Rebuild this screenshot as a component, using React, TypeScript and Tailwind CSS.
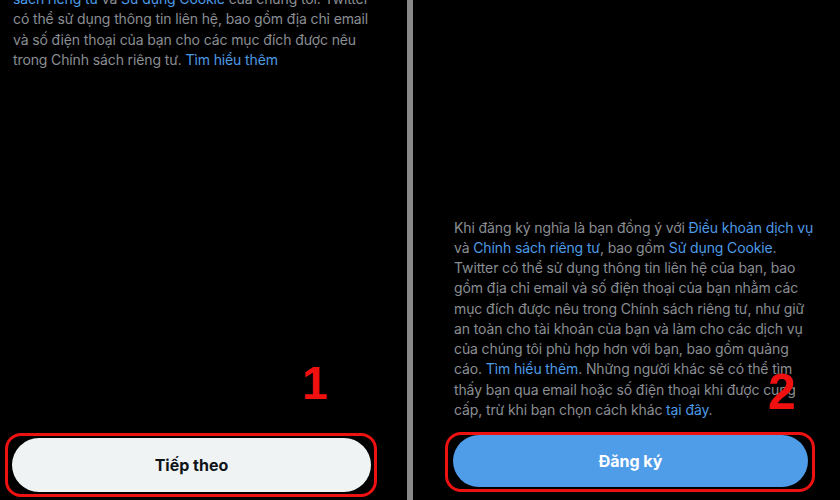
import React from 'react'

const link = 'text-[#4d9be6]'

function Annotation({ n, className }: { n: string; className: string }) {
  return (
    <span
      className={`absolute font-bold leading-none text-[#f01010] [font-family:'Liberation_Sans',Arial,sans-serif] ${className}`}
    >
      {n}
    </span>
  )
}

export default function App() {
  return (
    <div className="relative flex h-[500px] w-[840px] overflow-hidden bg-black [font-family:Inter,'Noto_Sans',sans-serif]">
      {/* Step 1 */}
      <div className="flex w-[407px] flex-col">
        <p className="-mt-[11px] whitespace-nowrap px-[13px] text-[14px] leading-[20.3px] tracking-[-0.12px] text-[#8a8e93]">
          <span className={link}>sách riêng tư</span> và <span className={link}>Sử dụng Cookie</span> của chúng tôi. Twitter
          <br />
          có thể sử dụng thông tin liên hệ, bao gồm địa chỉ email
          <br />
          và số điện thoại của bạn cho các mục đích được nêu
          <br />
          trong Chính sách riêng tư. <span className={link}>Tìm hiểu thêm</span>
        </p>
        <div className="flex-1" />
        <div className="mb-[3px] ml-[5px] w-[372px] rounded-[16px] border-[3px] border-[#ee1111] pt-[2px] pr-[3px] pb-[2px] pl-[4px]">
          <button className="flex h-[54px] w-full items-center justify-center rounded-full bg-[#eff3f4] text-[16px] font-bold text-[#0f1419]">
            Tiếp theo
          </button>
        </div>
      </div>

      <div className="w-[6px] bg-[#8a8a8a]" />

      {/* Step 2 */}
      <div className="flex flex-1 flex-col justify-end">
        <p className="whitespace-nowrap pl-[41px] text-[14px] leading-[20.25px] tracking-[-0.12px] text-[#8a8e93]">
          Khi đăng ký nghĩa là bạn đồng ý với <span className={link}>Điều khoản dịch vụ</span>
          <br />
          và <span className={link}>Chính sách riêng tư</span>, bao gồm <span className={link}>Sử dụng Cookie</span>.
          <br />
          Twitter có thể sử dụng thông tin liên hệ của bạn, bao
          <br />
          gồm địa chỉ email và số điện thoại của bạn nhằm các
          <br />
          mục đích được nêu trong Chính sách riêng tư, như giữ
          <br />
          an toàn cho tài khoản của bạn và làm cho các dịch vụ
          <br />
          của chúng tôi phù hợp hơn với bạn, bao gồm quảng
          <br />
          cáo. <span className={link}>Tìm hiểu thêm</span>. Những người khác sẽ có thể tìm
          <br />
          thấy bạn qua email hoặc số điện thoại khi được cung
          <br />
          cấp, trừ khi bạn chọn cách khác <span className={link}>tại đây</span>.
        </p>
        <div className="mt-[12px] mb-[8px] ml-[32px] w-[370px] rounded-[16px] border-[3px] border-[#ee1111] pt-0 pr-[4px] pb-[2px] pl-[5px]">
          <button className="flex h-[52px] w-full items-center justify-center rounded-full bg-[#4f9ce9] text-[16px] font-bold text-white">
            Đăng ký
          </button>
        </div>
      </div>

      <Annotation n="1" className="left-[302px] top-[360px] text-[46px]" />
      <Annotation n="2" className="left-[768px] top-[367px] text-[50px]" />
    </div>
  )
}
